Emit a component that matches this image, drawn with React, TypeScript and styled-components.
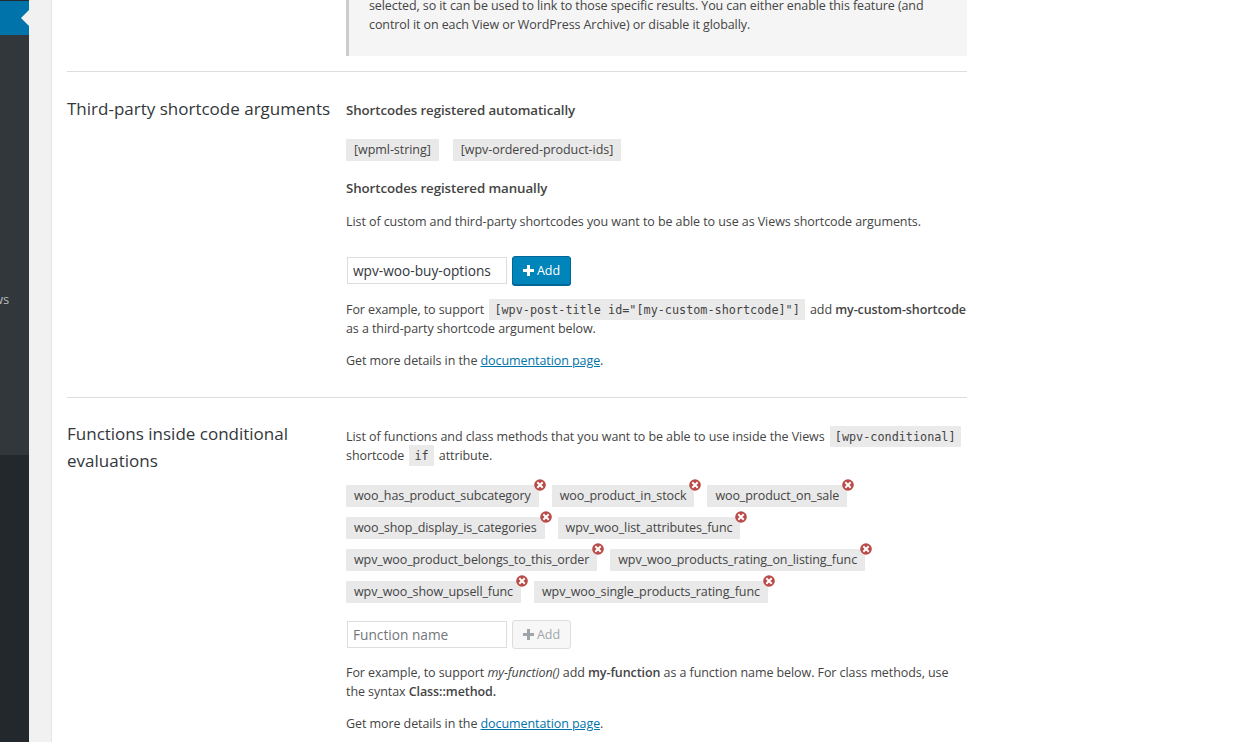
import styled, { createGlobalStyle } from 'styled-components'

const GlobalStyle = createGlobalStyle`
  html, body {
    margin: 0;
    padding: 0;
    height: 742px;
    overflow: hidden;
    background: #f1f1f1;
  }
  body {
    font-family: "Open Sans", "Noto Sans", sans-serif;
    font-size: 12.5px;
    letter-spacing: -0.09px;
    color: #444;
  }
`

const firstFunctions = [
  ['woo_has_product_subcategory', 'woo_product_in_stock', 'woo_product_on_sale'],
  ['woo_shop_display_is_categories', 'wpv_woo_list_attributes_func'],
  ['wpv_woo_product_belongs_to_this_order', 'wpv_woo_products_rating_on_listing_func'],
  ['wpv_woo_show_upsell_func', 'wpv_woo_single_products_rating_func'],
]

const PlusIcon = () => (
  <svg width="11" height="11" viewBox="0 0 11 11" aria-hidden="true">
    <path d="M4 0h3v4h4v3H7v4H4V7H0V4h4z" fill="currentColor" />
  </svg>
)

const RemoveIcon = () => (
  <RemoveBadge viewBox="0 0 12 12" aria-hidden="true">
    <circle cx="6" cy="6" r="5.8" fill="#b94a48" />
    <path d="M4 4l4 4M8 4l-4 4" stroke="#fff" strokeWidth="2" strokeLinecap="square" />
  </RemoveBadge>
)

export default function App() {
  return (
    <>
      <GlobalStyle />
      <Page>
        <Sidebar>
          <CurrentMenu>
            <MenuArrow />
          </CurrentMenu>
          <SubMenu>
            <MenuLabel>ws</MenuLabel>
          </SubMenu>
          <SidebarBottom />
        </Sidebar>
        <Main>
          <Panel>
            <Notice>
              <p>
                selected, so it can be used to link to those specific results. You can either enable this feature (and
                <br />
                control it on each View or WordPress Archive) or disable it globally.
              </p>
            </Notice>

            <Section>
              <SectionTitle>Third-party shortcode arguments</SectionTitle>
              <SectionBody>
                <Heading>Shortcodes registered automatically</Heading>
                <PlainTags>
                  <Tag>[wpml-string]</Tag>
                  <Tag>[wpv-ordered-product-ids]</Tag>
                </PlainTags>
                <Heading>Shortcodes registered manually</Heading>
                <Text $top={14}>List of custom and third-party shortcodes you want to be able to use as Views shortcode arguments.</Text>
                <AddRow $top={25}>
                  <TextInput defaultValue="wpv-woo-buy-options" />
                  <AddButton>
                    <PlusIcon /> Add
                  </AddButton>
                </AddRow>
                <Text $top={15}>
                  For example, to support <Code>[wpv-post-title id="[my-custom-shortcode]"]</Code> add{' '}
                  <Strong>my-custom-shortcode</Strong>
                  <br />
                  as a third-party shortcode argument below.
                </Text>
                <Text $top={13}>
                  Get more details in the <DocLink href="#">documentation page</DocLink>.
                </Text>
              </SectionBody>
            </Section>

            <Section>
              <SectionTitle $lift={1}>Functions inside conditional evaluations</SectionTitle>
              <SectionBody>
                <Text $top={0}>
                  List of functions and class methods that you want to be able to use inside the Views{' '}
                  <Code>[wpv-conditional]</Code>
                  <br />
                  shortcode <Code>if</Code> attribute.
                </Text>
                <FunctionList>
                  {firstFunctions.map((row) => (
                    <FunctionRow key={row[0]}>
                      {row.map((name) => (
                        <Tag key={name}>
                          {name}
                          <RemoveIcon />
                        </Tag>
                      ))}
                    </FunctionRow>
                  ))}
                </FunctionList>
                <AddRow $top={17}>
                  <TextInput placeholder="Function name" />
                  <AddButton $disabled>
                    <PlusIcon /> Add
                  </AddButton>
                </AddRow>
                <Text $top={14}>
                  For example, to support <em>my-function()</em> add <Strong>my-function</Strong> as a function name below. For class methods, use
                  <br />
                  the syntax <Strong>Class::method.</Strong>
                </Text>
                <Text $top={13}>
                  Get more details in the <DocLink href="#">documentation page</DocLink>.
                </Text>
              </SectionBody>
            </Section>
          </Panel>
        </Main>
      </Page>
    </>
  )
}

const Page = styled.div`
  display: flex;
  height: 742px;
  overflow: hidden;
`

const Sidebar = styled.div`
  width: 29px;
  flex-shrink: 0;
  display: flex;
  flex-direction: column;
  background: #23282d;
`

const CurrentMenu = styled.div`
  height: 34px;
  margin-top: 1px;
  background: #0073aa;
  display: flex;
  align-items: center;
  justify-content: flex-end;
`

const MenuArrow = styled.div`
  width: 0;
  height: 0;
  border-top: 8px solid transparent;
  border-bottom: 8px solid transparent;
  border-right: 8px solid #f1f1f1;
`

const SubMenu = styled.div`
  height: 420px;
  background: #32373c;
  padding-top: 255px;
  box-sizing: border-box;
  overflow: hidden;
`

const MenuLabel = styled.div`
  margin-left: -7px;
  font-size: 13px;
  line-height: 18px;
  color: #b4b9be;
`

const SidebarBottom = styled.div`
  flex: 1;
`

const Main = styled.div`
  flex: 1;
  padding-left: 22px;
  min-width: 0;
`

const Panel = styled.div`
  height: 742px;
  box-sizing: border-box;
  background: #fff;
  border-left: 1px solid #e5e5e5;
  padding-left: 15px;
  overflow: hidden;
`

const Notice = styled.div`
  width: 621px;
  height: 86px;
  margin: -30px 0 15px 279px;
  box-sizing: border-box;
  background: #f5f5f5;
  border-left: 3px solid #ccc;
  padding: 26px 20px 0;
  line-height: 19px;

  p {
    margin: 0;
  }
`

const Section = styled.div`
  width: 900px;
  display: grid;
  grid-template-columns: 279px 1fr;
  border-top: 1px solid #ddd;
  padding-top: 23px;
  padding-bottom: 27px;
`

const SectionTitle = styled.h2<{ $lift?: number }>`
  margin: ${(props) => -(props.$lift ?? 0)}px 0 0;
  font-size: 17px;
  font-weight: 400;
  line-height: 27px;
  letter-spacing: 0;
  color: #32373c;
`

const SectionBody = styled.div`
  min-width: 0;
  padding-top: 6px;
`

const Heading = styled.div`
  font-size: 13.3px;
  font-weight: 600;
  line-height: 19px;
  color: #444;
`

const Text = styled.p<{ $top: number }>`
  margin: ${(props) => props.$top}px 0 0;
  line-height: 19px;
  letter-spacing: -0.075px;
  white-space: nowrap;
`

const PlainTags = styled.div`
  display: flex;
  gap: 14px;
  margin: 19px 0 18px;
  letter-spacing: -0.05px;
`

const FunctionList = styled.div`
  display: flex;
  flex-direction: column;
  gap: 10px;
  margin-top: 20px;
`

const FunctionRow = styled.div`
  display: flex;
  gap: 13px;
`

const Tag = styled.span`
  position: relative;
  height: 22px;
  padding: 0 8px;
  background: #e9e9e9;
  line-height: 22px;
  white-space: nowrap;
`

const RemoveBadge = styled.svg`
  position: absolute;
  top: -6px;
  right: -7px;
  width: 12px;
  height: 12px;
`

const AddRow = styled.div<{ $top: number }>`
  display: flex;
  align-items: center;
  gap: 5px;
  margin-top: ${(props) => props.$top}px;
  padding-left: 1px;
`

const TextInput = styled.input`
  width: 160px;
  height: 27px;
  box-sizing: border-box;
  border: 1px solid #ddd;
  padding: 0 5px;
  font: inherit;
  font-size: 13.7px;
  letter-spacing: 0;
  color: #32373c;
  outline: none;

  &::placeholder {
    color: #72777c;
    opacity: 1;
  }
`

const AddButton = styled.button<{ $disabled?: boolean }>`
  width: 59px;
  height: 29px;
  box-sizing: border-box;
  display: inline-flex;
  align-items: center;
  justify-content: center;
  gap: 3px;
  padding: 0;
  font: inherit;
  border-radius: 3px;
  border: 1px solid ${(props) => (props.$disabled ? '#ddd' : '#006799')};
  background: ${(props) => (props.$disabled ? '#f7f7f7' : '#0085ba')};
  color: ${(props) => (props.$disabled ? '#a0a5aa' : '#fff')};
  box-shadow: ${(props) => (props.$disabled ? 'none' : '0 1px 0 #006799')};
`

const Code = styled.code`
  margin: 0 2px;
  padding: 4px 5px 3px;
  background: #eaeaea;
  font-family: "DejaVu Sans Mono", monospace;
  font-size: 11.8px;
  line-height: 1;
  letter-spacing: 0;
  color: #444;
`

const Strong = styled.strong`
  font-weight: 600;
`

const DocLink = styled.a`
  color: #0073aa;
  text-decoration: underline;
`
